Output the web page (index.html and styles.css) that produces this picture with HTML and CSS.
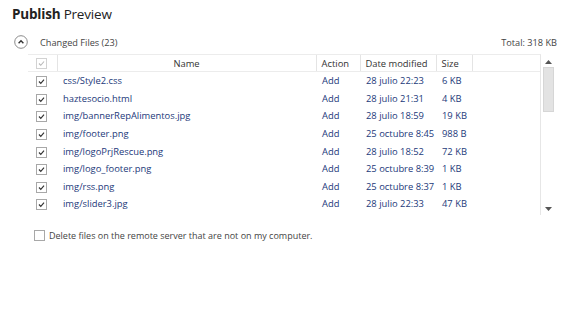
FILE: index.html
```html
<!DOCTYPE html>
<html lang="en">
<head>
  <meta charset="UTF-8">
  <title>Publish Preview</title>
  <link rel="stylesheet" href="styles.css">
</head>
<body>
  <h1 class="title"><b>Publish</b> Preview</h1>

  <div class="summary">
    <div class="summary-left">
      <span class="collapse">
        <svg width="14" height="14" viewBox="0 0 14 14"><circle cx="7" cy="7" r="6.3" fill="none" stroke="#8a8a8a" stroke-width="1"/><path d="M4.6 8.2 L7 5.8 L9.4 8.2" fill="none" stroke="#333" stroke-width="1.4"/></svg>
      </span>
      <span>Changed Files (23)</span>
    </div>
    <div class="total">Total: 318 KB</div>
  </div>

  <div class="files">
    <div class="list">
      <table>
        <colgroup>
          <col class="c-check">
          <col class="c-name">
          <col class="c-action">
          <col class="c-date">
          <col class="c-size">
          <col>
        </colgroup>
        <thead>
          <tr>
            <th class="check"><span class="box disabled"><svg viewBox="0 0 10 10"><path d="M2.2 5 L4.2 7 L7.8 2.8" fill="none" stroke="#b8b8b8" stroke-width="1.2"/></svg></span></th>
            <th class="name">Name</th>
            <th>Action</th>
            <th>Date modified</th>
            <th>Size</th>
            <th></th>
          </tr>
        </thead>
        <tbody>
          <tr><td class="check"><span class="box"><svg viewBox="0 0 10 10"><path d="M2.2 5 L4.2 7 L7.8 2.8" fill="none" stroke="#333" stroke-width="1.3"/></svg></span></td><td>css/Style2.css</td><td>Add</td><td>28 julio 22:23</td><td>6 KB</td><td></td></tr>
          <tr><td class="check"><span class="box"><svg viewBox="0 0 10 10"><path d="M2.2 5 L4.2 7 L7.8 2.8" fill="none" stroke="#333" stroke-width="1.3"/></svg></span></td><td>haztesocio.html</td><td>Add</td><td>28 julio 21:31</td><td>4 KB</td><td></td></tr>
          <tr><td class="check"><span class="box"><svg viewBox="0 0 10 10"><path d="M2.2 5 L4.2 7 L7.8 2.8" fill="none" stroke="#333" stroke-width="1.3"/></svg></span></td><td>img/bannerRepAlimentos.jpg</td><td>Add</td><td>28 julio 18:59</td><td>19 KB</td><td></td></tr>
          <tr><td class="check"><span class="box"><svg viewBox="0 0 10 10"><path d="M2.2 5 L4.2 7 L7.8 2.8" fill="none" stroke="#333" stroke-width="1.3"/></svg></span></td><td>img/footer.png</td><td>Add</td><td>25 octubre 8:45</td><td>988 B</td><td></td></tr>
          <tr><td class="check"><span class="box"><svg viewBox="0 0 10 10"><path d="M2.2 5 L4.2 7 L7.8 2.8" fill="none" stroke="#333" stroke-width="1.3"/></svg></span></td><td>img/logoPrjRescue.png</td><td>Add</td><td>28 julio 18:52</td><td>72 KB</td><td></td></tr>
          <tr><td class="check"><span class="box"><svg viewBox="0 0 10 10"><path d="M2.2 5 L4.2 7 L7.8 2.8" fill="none" stroke="#333" stroke-width="1.3"/></svg></span></td><td>img/logo_footer.png</td><td>Add</td><td>25 octubre 8:39</td><td>1 KB</td><td></td></tr>
          <tr><td class="check"><span class="box"><svg viewBox="0 0 10 10"><path d="M2.2 5 L4.2 7 L7.8 2.8" fill="none" stroke="#333" stroke-width="1.3"/></svg></span></td><td>img/rss.png</td><td>Add</td><td>25 octubre 8:37</td><td>1 KB</td><td></td></tr>
          <tr><td class="check"><span class="box"><svg viewBox="0 0 10 10"><path d="M2.2 5 L4.2 7 L7.8 2.8" fill="none" stroke="#333" stroke-width="1.3"/></svg></span></td><td>img/slider3.jpg</td><td>Add</td><td>28 julio 22:33</td><td>47 KB</td><td></td></tr>
        </tbody>
      </table>
    </div>
    <div class="scrollbar">
      <svg class="arrow" width="7" height="4" viewBox="0 0 7 4"><path d="M0 4 L3.5 0 L7 4 Z" fill="#555"/></svg>
      <div class="track"><div class="thumb"></div></div>
      <svg class="arrow" width="7" height="4" viewBox="0 0 7 4"><path d="M0 0 L3.5 4 L7 0 Z" fill="#555"/></svg>
    </div>
  </div>

  <label class="option"><span class="box plain"></span>Delete files on the remote server that are not on my computer.</label>
</body>
</html>
```

FILE: styles.css
```css
body {
  margin: 0;
  width: 567px;
  height: 311px;
  background: #fff;
  font-family: "Open Sans", "Noto Sans", sans-serif;
  color: #333;
  overflow: hidden;
}

.title {
  margin: 0;
  padding: 4px 0 0 12px;
  font-size: 13.5px;
  letter-spacing: -0.2px;
  font-weight: normal;
  line-height: 20px;
  color: #222;
}

.title b {
  font-weight: 700;
}

.summary {
  display: flex;
  justify-content: space-between;
  align-items: center;
  height: 18px;
  margin-top: 9px;
  padding: 0 10px 0 14px;
  font-size: 9.2px;
  color: #444;
}

.summary-left {
  display: flex;
  align-items: center;
  gap: 12px;
}

.collapse svg {
  display: block;
}

.files {
  display: flex;
  margin: 3px 11px 0 28px;
  height: 161px;
}

.list {
  flex: 1;
  border-top: 1px solid #ececec;
  border-right: 1px solid #e6e6e6;
}

table {
  width: 100%;
  border-collapse: collapse;
  table-layout: fixed;
  font-size: 9.4px;
}

.c-check { width: 29px; }
.c-name { width: 259px; }
.c-action { width: 44px; }
.c-date { width: 76px; }
.c-size { width: 36px; }

th {
  height: 16px;
  padding: 0 0 0 5px;
  font-weight: normal;
  text-align: left;
  color: #333;
  border-right: 1px solid #e4e4e4;
  border-bottom: 1px solid #ececec;
}

th:last-child {
  border-right: none;
}

th.name {
  text-align: center;
  padding: 0;
}

td {
  height: 17.6px;
  padding: 0 0 0 6px;
  color: #23397a;
  white-space: nowrap;
}

.check {
  padding: 0 0 0 8px;
}

.box {
  display: inline-block;
  width: 9px;
  height: 9px;
  border: 1px solid #a8a8a8;
  background: #fff;
  vertical-align: middle;
}

.box svg {
  display: block;
  width: 9px;
  height: 9px;
}

.box.disabled {
  border-color: #d2d2d2;
}

.scrollbar {
  width: 15px;
  display: flex;
  flex-direction: column;
  align-items: center;
  padding: 6px 0 4px;
  gap: 3px;
}

.track {
  flex: 1;
  width: 100%;
  padding-left: 3px;
}

.thumb {
  width: 11px;
  height: 45px;
  background: #e3e3e3;
  border: 1px solid #d6d6d6;
  box-sizing: border-box;
}

.option {
  display: flex;
  align-items: center;
  gap: 4px;
  margin: 14px 0 0 34px;
  font-size: 9px;
  color: #444;
}

.box.plain {
  width: 9px;
  height: 9px;
  border-color: #a8a8a8;
}
```
